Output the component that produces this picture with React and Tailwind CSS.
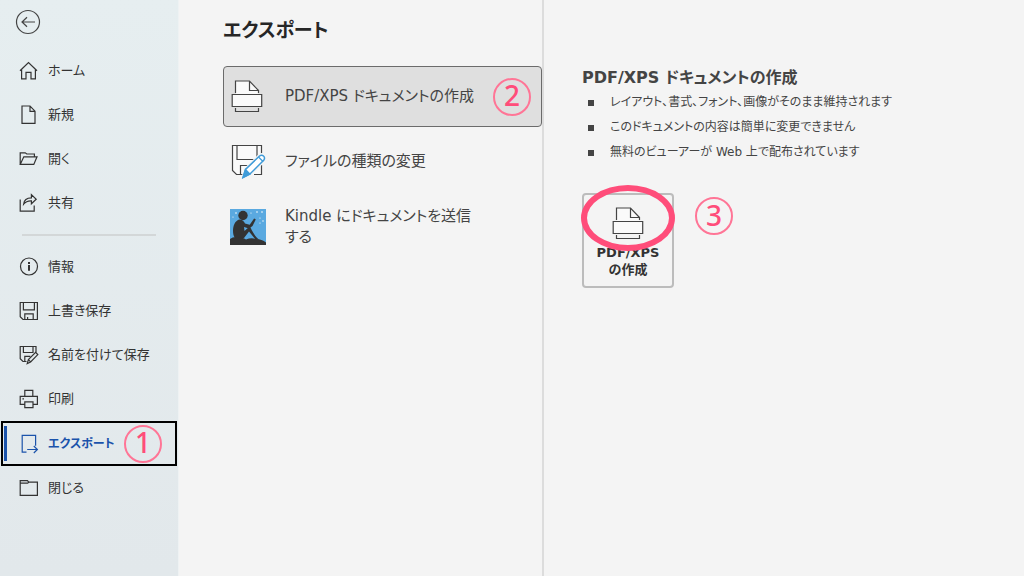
import clsx from "clsx";

const stroke = { fill: "none", stroke: "currentColor", strokeWidth: 1.2 };

const BackIcon = () => (
  <svg viewBox="0 0 26 26" className="size-[26px]" {...stroke}>
    <circle cx="13" cy="13" r="11.5" />
    <path d="M20 13H7.5M12 8.2L7 13l5 4.8" />
  </svg>
);

const HomeIcon = () => (
  <svg viewBox="0 0 20 20" className="size-5" {...stroke}>
    <path d="M1 9.800L9.500 1.500l8.500 8.300M2.600 8.600v9.200h4.400v-6.400h5v6.400h4.400V8.600" />
  </svg>
);

const NewIcon = () => (
  <svg viewBox="0 0 20 20" className="size-5" {...stroke}>
    <path d="M3 1h8l5 5.200v12.200H3zM11 1v5.400h5" />
  </svg>
);

const OpenIcon = () => (
  <svg viewBox="0 0 20 20" className="size-5" {...stroke}>
    <path d="M1.200 15.400V3.800h5l1.600 1.200h7.600v2.800M1.200 15.400L4.800 7.800h13.200l-3.200 7.600z" />
  </svg>
);

const ShareIcon = () => (
  <svg viewBox="0 0 20 20" className="size-5" {...stroke}>
    <path d="M1.200 6.500v11.700h14v-5.600" />
    <path d="M4.600 11.200c.4-4.200 3.200-6.400 7.800-6.400V1.600l4.800 4.600-4.800 4.600V7.800c-3.600-.2-5.800.8-7.800 3.400z" />
  </svg>
);

const InfoIcon = () => (
  <svg viewBox="0 0 20 20" className="size-5" {...stroke}>
    <circle cx="10" cy="9.500" r="8.500" />
    <path d="M10 8v5.800M10 5v2" strokeWidth="2" />
  </svg>
);

const SaveIcon = () => (
  <svg viewBox="0 0 20 20" className="size-5" {...stroke}>
    <path d="M1.200 1.500h17.200v17H4L1.200 15.700zM4.400 1.500v7.300h11V1.500M5.800 18.500v-5.600h8.400v5.600M8.600 18.500v-2.600" />
  </svg>
);

const SaveAsIcon = () => (
  <svg viewBox="0 0 20 20" className="size-5" {...stroke}>
    <path d="M7.500 16.500H4L1.200 13.700V1.500H17v6M4.400 1.500v6h9.600v-6M5.800 16.300v-5h5.600" />
    <path d="M8.200 18.600l1.200-4 7.200-7.200 2.200 2.200-7.200 7.400zM9.400 14.600l2.200 2.200" />
  </svg>
);

const PrintIcon = () => (
  <svg viewBox="0 0 20 20" className="size-5" {...stroke}>
    <path d="M5.800 7.400V1.400h8v6M5.600 15.400H1.200v-8h17.200v8h-4.400M5.800 12.800h8.200v5.800H5.800zM3.400 9.800h1.600" />
  </svg>
);

const ExportIcon = () => (
  <svg viewBox="0 0 20 20" className="size-5 shrink-0" {...stroke}>
    <path d="M7.500 18.200H3.200V1.400h13.400v10.400M8.200 15.500h10M14.800 12l3.600 3.500-3.600 3.500" />
  </svg>
);

const CloseIcon = () => (
  <svg viewBox="0 0 20 20" className="size-5" {...stroke}>
    <path d="M1.200 2.600h7.200l1.400 1.600h8.600v13.200H1.200zM1.200 5.200h7.400l1.200-1" />
  </svg>
);

// page being pushed out of a printer, used in the list and on the big button
const PrinterPageIcon = ({ className }) => (
  <svg viewBox="0 0 32 34" className={className} fill="none" stroke="#444" strokeWidth="1.2">
    <path d="M5 14V1h14l8 8v5z" fill="#fafafa" stroke="none" />
    <path d="M4.500 13V1h14l9 9.500M18.500 1v9.500h9V13" />
    <path d="M1.200 14.500h29.500v12H1.200z" fill="#fafafa" />
    <path d="M4.500 28v3.500h23V28" />
  </svg>
);

const FileTypeIcon = () => (
  <svg viewBox="0 0 36 36" className="size-9" fill="none" stroke="#444" strokeWidth="1.2">
    <path d="M2.500 2.500h29v29h-25l-4-4z" fill="#fafafa" stroke="none" />
    <path d="M13 31.500H6.500l-4-4v-25h29V12M31.500 22v9.500H24M7 2.500v14h20v-14M10.500 31.500v-9h9" />
    <path d="M13 35l2-8.500L29.500 12.500q2.500-1.800 4.500 0t.4 4.800L20 31.500z" fill="#f4f4f4" stroke="#f4f4f4" strokeWidth="3" />
    <path d="M13 34.500l2.500-8L29.500 13q2.200-1.500 4 0t.4 4L20 31z" fill="#fff" stroke="#3f9bd8" strokeWidth="1.5" />
    <path d="M13 34.500l2.500-8L20 31z" fill="#3f9bd8" stroke="#3f9bd8" />
    <path d="M28.500 14l4.500 4.500" stroke="#3f9bd8" />
  </svg>
);

const KindleIcon = () => (
  <svg viewBox="0 0 36 36" className="size-9">
    <path d="M0 0h36v36H0z" fill="#5aa9e0" />
    <g fill="#fff">
      <circle cx="6" cy="4" r=".8" />
      <circle cx="3" cy="8" r=".6" />
      <circle cx="21" cy="4" r=".6" />
      <circle cx="27" cy="3" r=".8" />
      <circle cx="32" cy="3" r=".8" />
      <circle cx="30" cy="9" r=".6" />
      <circle cx="33" cy="12" r=".7" />
      <circle cx="30" cy="14" r=".6" />
    </g>
    <g fill="#333">
      <circle cx="13" cy="6.500" r="4.700" />
      <path d="M9 10.500c-4 1.500-6 6-6 11 0 3 .5 5.500 2 7.500h9l5-6.500 6.500 8h3.500c-3-2-6-6.500-8.500-12-2-.5-4 1.500-6 3.500l-.5-4 5 1.500 3.500-2.500 3-6 .2-.8-1.600-.8-4.400 6.300-4.700-1.200c-1-2.500-3-4.500-6.500-4z" />
      <path d="M0 36v-6q3-2.500 7-2 6 0 9 2.500 5-2 10-.5 6 0 10 3.500V36z" />
    </g>
  </svg>
);

const mainMenu = [
  { label: "ホーム", Icon: HomeIcon },
  { label: "新規", Icon: NewIcon },
  { label: "開く", Icon: OpenIcon },
  { label: "共有", Icon: ShareIcon },
];

const fileMenu = [
  { label: "情報", Icon: InfoIcon },
  { label: "上書き保存", Icon: SaveIcon },
  { label: "名前を付けて保存", Icon: SaveAsIcon },
  { label: "印刷", Icon: PrintIcon },
  { label: "エクスポート", Icon: ExportIcon, active: true, step: 1 },
  { label: "閉じる", Icon: CloseIcon },
];

const notes = [
  "レイアウト、書式、フォント、画像がそのまま維持されます",
  "このドキュメントの内容は簡単に変更できません",
  "無料のビューアーが Web 上で配布されています",
];

const Step = ({ children, className }) => (
  <span
    className={clsx(
      "flex size-[38px] shrink-0 items-center justify-center rounded-full border-2 border-[#ff7596] pb-[3px] font-['Noto_Sans',sans-serif] text-[28px] leading-none font-medium text-[#ff4d7a]",
      className
    )}
  >
    {children}
  </span>
);

const MenuItem = ({ label, Icon, active, step }) => (
  <li className={clsx(active && "mx-px")}>
    <button
      type="button"
      className={clsx(
        "flex w-full items-center gap-[9px] text-left whitespace-nowrap",
        active
          ? "h-[45px] border-2 border-black pr-[13px] text-[12px] font-bold text-[#1b53ab]"
          : "h-11 pl-[19px] text-[13px] text-[#333]"
      )}
    >
      {active && <span className="mr-[3px] ml-px h-[35px] w-[3px] bg-[#1b53ab]" />}
      <Icon />
      <span>{label}</span>
      {step && <Step className="ml-auto">{step}</Step>}
    </button>
  </li>
);

const Sidebar = () => (
  <nav className="w-[179px] shrink-0 border-r border-[#eef2f3] bg-linear-to-b from-[#e6eef0] to-[#e2e8eb]">
    <button type="button" aria-label="戻る" className="mt-[9px] mb-[14px] ml-[15px] block text-[#444]">
      <BackIcon />
    </button>
    <ul>
      {mainMenu.map((item) => (
        <MenuItem key={item.label} {...item} />
      ))}
    </ul>
    <hr className="mt-[9px] mr-[22px] mb-[9px] ml-[22px] border-t-2 border-[#d3d7d8]" />
    <ul>
      {fileMenu.map((item) => (
        <MenuItem key={item.label} {...item} />
      ))}
    </ul>
  </nav>
);

const ExportList = () => (
  <section className="w-[365px] shrink-0 border-r-2 border-[#dcdcdc] pl-11 text-[15px] leading-[21px] text-[#444]">
    <h1 className="mt-4 mb-[22px] text-[19px] leading-7 font-bold text-[#262626]">エクスポート</h1>
    <button
      type="button"
      className="flex h-[61px] w-full items-center rounded-[4px] border border-[#6b6b6b] bg-[#dfdfdf] pr-[10px] pl-[7px] text-left whitespace-nowrap"
    >
      <PrinterPageIcon className="h-[34px] w-8" />
      <span className="ml-[22px]">PDF/XPS ドキュメントの作成</span>
      <Step className="ml-auto">2</Step>
    </button>
    <button type="button" className="flex h-[68px] w-full items-center gap-[19px] pl-[7px] text-left">
      <FileTypeIcon />
      <span>ファイルの種類の変更</span>
    </button>
    <button type="button" className="flex h-16 w-full items-center gap-[19px] pl-[7px] text-left">
      <KindleIcon />
      <span className="w-48">Kindle にドキュメントを送信する</span>
    </button>
  </section>
);

const ExportDetail = () => (
  <section className="flex-1 pl-[38px] text-[#444]">
    <h2 className="mt-[66px] text-[16px] leading-6 font-bold">PDF/XPS ドキュメントの作成</h2>
    <ul className="text-[12px] leading-[25px]">
      {notes.map((note) => (
        <li key={note} className="flex items-center">
          <span className="mr-4 ml-[6px] size-[6px] bg-[#444]" />
          {note}
        </li>
      ))}
    </ul>
    <div className="mt-7 flex items-start gap-[21px]">
      <button
        type="button"
        className="relative flex h-[95px] w-[92px] flex-col items-center rounded-[4px] border-2 border-[#bcbcbc] pt-3 text-[13px] leading-[17px] font-bold text-[#333]"
      >
        <PrinterPageIcon className="mb-[3px] h-[34px] w-8" />
        <span>
          PDF/XPS
          <br />
          の作成
        </span>
        <span className="absolute -top-[10px] -left-[3px] h-[66px] w-[94px] rounded-[50%] border-[6px] border-[#ff4d7a]" />
      </button>
      <Step className="mt-1">3</Step>
    </div>
  </section>
);

export default function App() {
  return (
    <div className="flex min-h-screen bg-[#f4f4f4] font-['DejaVu_Sans','Noto_Sans_CJK_JP',sans-serif] [font-feature-settings:'palt']">
      <Sidebar />
      <main className="flex flex-1">
        <ExportList />
        <ExportDetail />
      </main>
    </div>
  );
}
